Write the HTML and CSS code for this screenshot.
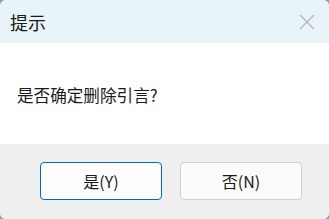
FILE: index.html
```html
<!DOCTYPE html>
<html lang="zh">
<head>
<meta charset="utf-8">
<link rel="stylesheet" href="styles.css">
</head>
<body>
<div class="dialog">
  <div class="titlebar">
    <span class="title">提示</span>
    <svg class="close" width="16" height="16" viewBox="0 0 16 16"><path d="M1 1 L15 15 M15 1 L1 15" stroke="#b4b4b4" stroke-width="1.2" fill="none"/></svg>
  </div>
  <div class="content">
    <p class="message">是否确定删除引言?</p>
  </div>
  <div class="footer">
    <button class="btn primary">是(Y)</button>
    <button class="btn">否(N)</button>
  </div>
</div>
</body>
</html>
```
FILE: styles.css
```css
html, body {
  margin: 0;
  padding: 0;
  background: #9a9a9a;
}
.dialog {
  width: 329px;
  height: 219px;
  border-radius: 6px;
  overflow: hidden;
  display: flex;
  flex-direction: column;
  font-family: "Noto Sans CJK SC", "Liberation Sans", sans-serif;
  background: #ffffff;
}
.titlebar {
  height: 43px;
  background: #e8f4f8;
  display: flex;
  align-items: center;
  justify-content: space-between;
  padding: 0 14px 0 10px;
  box-sizing: border-box;
}
.title {
  font-size: 18px;
  color: #1a1a1a;
  line-height: 1;
}
.close {
  display: block;
}
.content {
  height: 101px;
  display: flex;
  align-items: center;
  padding: 0 17px;
  box-sizing: border-box;
}
.message {
  margin: 0;
  margin-top: 2px;
  font-size: 16.6px;
  color: #1a1a1a;
}
.footer {
  flex: 1;
  background: #efefef;
  display: flex;
  justify-content: flex-end;
  align-items: flex-start;
  padding: 18px 27px 0 0;
  gap: 18px;
}
.btn {
  width: 122px;
  height: 38px;
  border: 1px solid #cfcfcf;
  border-radius: 4px;
  background: #fbfbfb;
  font-family: "Noto Sans CJK SC", "Liberation Sans", sans-serif;
  font-size: 16px;
  color: #1a1a1a;
  padding: 0;
}
.btn.primary {
  border: 1.5px solid #0067c0;
  background: #fdfdfd;
}
```
